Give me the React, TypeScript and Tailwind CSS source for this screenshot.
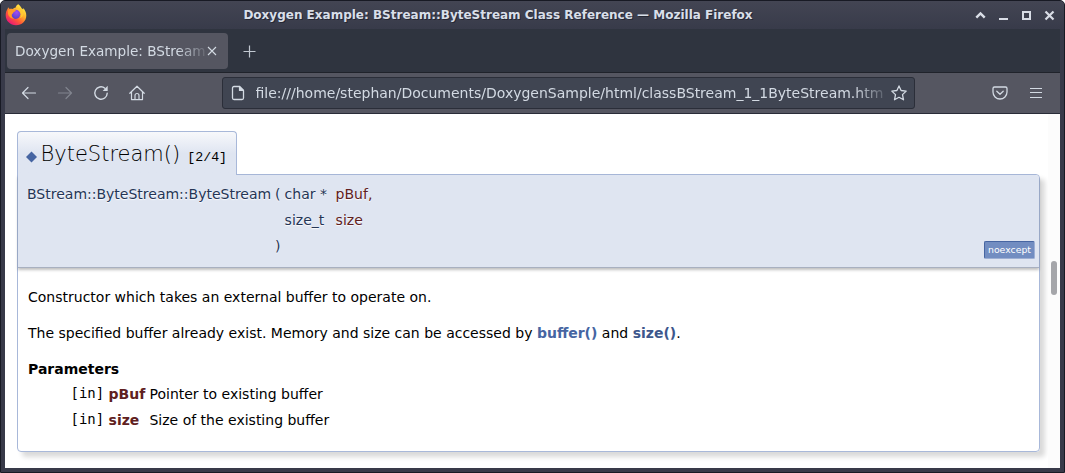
import React from "react";

const FirefoxLogo = () => (
  <svg viewBox="0 0 22 22" className="h-[22px] w-[22px] shrink-0">
    <defs>
      <linearGradient id="fox" x1="0.85" y1="0.1" x2="0.2" y2="0.95">
        <stop offset="0" stopColor="#fff04a" />
        <stop offset="0.35" stopColor="#ffb02a" />
        <stop offset="0.65" stopColor="#ff5a35" />
        <stop offset="1" stopColor="#e8127c" />
      </linearGradient>
      <radialGradient id="globe" cx="0.6" cy="0.3" r="0.8">
        <stop offset="0" stopColor="#a04cf5" />
        <stop offset="1" stopColor="#4b3fc4" />
      </radialGradient>
    </defs>
    <path fill="url(#fox)" d="M13.3.2C15 1.4 16 3 16.6 4.2c.8.4 1.3.9 1.6 1.3l-.1-1.4c2 2 3.2 4.700 3.200 7.300C21.300 17 16.800 21.200 11 21.200S.7 17 .7 11.300c0-3 .8-5 2.100-6.800l.2-1.300 1.700 1.700c1.100-.2 2.200-.1 3 .2.9-.9 1.900-1.500 3-1.700C10.900 2 12 .9 13.300.2z" />
    <circle cx="10.700" cy="10.300" r="4.600" fill="url(#globe)" />
    <path fill="#ff9a28" d="M3 6.500c2-1.500 4-1.500 5.300-.7 1 .1 2 .1 2.700.5-.5 1.300-2 1.600-2.600 1.900.1 1.300-1.200 1.500-1.600 2.500-.4 1.800.8 3.200 2.400 3.900-3 .5-5.800-2-6.200-5z" />
    <path fill="#ffc832" d="M11 5.500c2.500-.2 5.300 2 5.200 5.200 0 1.500-.7 2.900-1.800 3.700 2.800-.8 4.300-3.200 4-5.900-.3-2.200-2.500-3.600-3.800-4.500z" />
  </svg>
);

const Caret = () => (
  <svg viewBox="0 0 11 11" className="size-[11px]" fill="none" stroke="#d9dde6" strokeWidth="2.400"><path d="M1.300 7.700 5.500 3.500l4.200 4.200" /></svg>
);
const Minimize = () => (
  <svg viewBox="0 0 11 11" className="size-[11px]"><path fill="#d9dde6" d="M1 8h9v2H1z" /></svg>
);
const Maximize = () => (
  <svg viewBox="0 0 11 11" className="size-[11px]"><path fill="none" stroke="#d9dde6" strokeWidth="2" d="M2 2h7v7H2z" /></svg>
);
const Close = () => (
  <svg viewBox="0 0 11 11" className="size-[11px]"><path fill="none" stroke="#d9dde6" strokeWidth="2.200" d="m1.500 1.500 8 8m0-8-8 8" /></svg>
);

const Glyph = ({ children, className = "" }: { children: React.ReactNode; className?: string }) => (
  <svg viewBox="0 0 16 16" className={`size-4 shrink-0 ${className}`} fill="none" stroke="#d3dae3" strokeWidth="1.200" strokeLinecap="round" strokeLinejoin="round">
    {children}
  </svg>
);

export default function App() {
  return (
    <div className="h-[473px] w-[1065px] overflow-hidden bg-white font-['DejaVu_Sans',sans-serif]">
      <div className="flex h-full flex-col overflow-hidden rounded-t-[5px] border border-[#181a24] bg-[#383a49] px-1 pb-1">
        <header className="-mx-1 flex h-7 shrink-0 items-center bg-linear-to-b from-[#434553] to-[#383b4a] pr-[9px] pl-1">
          <FirefoxLogo />
          <div className="flex-1 pr-[6px] text-center text-[12px] font-bold whitespace-nowrap text-[#d9dfe9] [text-shadow:1px_1px_0_#252733]">Doxygen Example: BStream::ByteStream Class Reference — Mozilla Firefox</div>
          <div className="flex gap-3">
            <Caret /><Minimize /><Maximize /><Close />
          </div>
        </header>

        <div className="flex h-[44px] shrink-0 items-start border-b border-[#20232b] bg-[#2f343f] pt-1 pl-[2px]">
          <div className="flex h-9 w-[221px] items-center rounded bg-[#555661] pr-[11px] pl-2">
            <div className="w-[190px] shrink-0 text-[13.600px] whitespace-nowrap text-[#d3dae3] [mask-image:linear-gradient(to_right,black_162px,transparent_195px)]">Doxygen Example: BStream:</div>
            <svg viewBox="0 0 10 10" className="ml-[2px] size-[10px] shrink-0" stroke="#d3dae3" strokeWidth="1.100"><path d="m1 1 8 8m0-8-8 8" /></svg>
          </div>
          <svg viewBox="0 0 13 13" className="mt-[12px] ml-[15px] size-[13px]" stroke="#c2c8d1" strokeWidth="1.200"><path d="M6.500.5v12M.5 6.500h12" /></svg>
        </div>

        <nav className="flex h-[41px] shrink-0 items-center border-b border-[#292c38] bg-[#555661] pr-4 pl-4">
          <div className="flex w-[201px] gap-5">
            <Glyph><path d="M14.500 8h-13M7 2.500 1.500 8 7 13.500" /></Glyph>
            <Glyph className="opacity-35"><path d="M1.500 8h13M9 2.500 14.500 8 9 13.500" /></Glyph>
            <Glyph><path strokeWidth="1.400" d="M14.200 8.200a6.200 6.200 0 1 1-2.300-5" /><path fill="#d3dae3" stroke="none" d="M14.700.8v5.100h-5z" /></Glyph>
            <Glyph><path d="M.8 8.300 8 1.200l7.200 7.100M2.500 6.800v7.800h11V6.800M6 14.500v-4a2 2 0 0 1 4 0v4" /></Glyph>
          </div>
          <div className="flex h-8 w-[693px] items-center rounded-[3px] border border-[#2b2e39] bg-[#404552] pr-[7px] pl-[7px]">
            <Glyph><path strokeWidth="1.300" d="M9.500 1.500H4A1.500 1.500 0 0 0 2.500 3v10A1.500 1.500 0 0 0 4 14.500h8a1.500 1.500 0 0 0 1.500-1.500V5.500z" /><path fill="#d3dae3" d="M9.500 1.500v4h4z" /></Glyph>
            <div className="ml-[9.500px] w-[630px] shrink-0 text-[14px] whitespace-nowrap text-[#d3dae3] [mask-image:linear-gradient(to_right,black_598px,transparent_635px)]">file:///home/stephan/Documents/DoxygenSample/html/classBStream_1_1ByteStream.htm</div>
            <Glyph className="ml-[5.500px]"><path strokeWidth="1.300" d="m8 .9 2.100 4.600 5.100.6-3.700 3.500 1 5.200L8 12.300l-4.500 2.500 1-5.200L.8 6.100l5.100-.6z" /></Glyph>
          </div>
          <div className="ml-auto flex gap-5">
            <Glyph><path strokeWidth="1.300" d="M2.500 2h11A1.500 1.500 0 0 1 15 3.500V7A7 7 0 0 1 1 7V3.500A1.500 1.500 0 0 1 2.500 2zM4.800 6.200 8 9.200l3.200-3" /></Glyph>
            <Glyph><path strokeLinecap="butt" strokeWidth="1" d="M2 3.500h12M2 7.500h12M2 12.500h12" /></Glyph>
          </div>
        </nav>

        <main className="flex min-h-0 flex-1 bg-white">
          <div className="min-w-0 flex-1 pt-[17px] pr-2 pl-3 text-[14px] leading-[22px] text-black">
            <h2 className="relative z-10 -mb-px flex h-[44px] w-[220px] items-center rounded-t border border-b-0 border-[#a8b8d9] bg-linear-to-b from-[#f7f8fb] via-[#dfe5f1] via-50% to-[#dfe5f1] pl-[8px] whitespace-nowrap">
              <svg viewBox="0 0 12 12" className="mt-[6px] size-[12px]"><path fill="#4665a2" d="M5.500.5 11 6l-5.500 5.500L0 6z" /></svg>
              <span className="ml-[2.500px] text-[21px] font-extralight">ByteStream()</span>
              <span className="mt-[8px] ml-[7px] font-['Liberation_Mono',monospace] text-[13.300px] font-normal">[2/4]</span>
            </h2>
            <section className="h-[278px] w-[1023px] rounded-tr rounded-b border border-[#a8b8d9] shadow-[5px_5px_5px_rgba(0,0,0,0.15)]">
              <div className="flex h-[93px] justify-between rounded-tr border-b border-[#a8b0c0] bg-[#dfe5f1] pt-[6px] pl-[9px] text-[#253555] shadow-[0_2px_3px_rgba(0,0,0,0.25)] [text-shadow:0_1px_1px_rgba(255,255,255,0.9)]">
                <div className="grid auto-rows-[26px] grid-cols-[248px_9.600px_51px_60px] leading-[26px] whitespace-nowrap">
                  <span>BStream::ByteStream::ByteStream</span><span>(</span><span>char *</span><span className="text-[#602020]">pBuf,</span>
                  <span /><span /><span>size_t</span><span className="text-[#602020]">size</span>
                  <span /><span>)</span>
                </div>
                <span className="mt-[60px] mr-[4px] h-[18px] w-[51px] rounded-[2px] border border-[#4665a2] border-r-[#9dafd4] border-b-[#9dafd4] bg-[#728dc1] text-center text-[9.330px] leading-[16px] text-white [text-shadow:none]">noexcept</span>
              </div>
              <div className="px-[10px] pt-[18px]">
                <p>Constructor which takes an external buffer to operate on.</p>
                <p className="mt-[14px]">The specified buffer already exist. Memory and size can be accessed by <b className="text-[#4665a2]">buffer()</b> and <b className="text-[#3d578c]">size()</b>.</p>
                <h3 className="mt-[14px] font-bold">Parameters</h3>
                <div className="grid auto-rows-[26px] grid-cols-[38.100px_40.900px_auto] pl-[42.500px] leading-[28px]">
                  <span className="-mt-px font-['DejaVu_Sans_Mono',monospace]">[in]</span><b className="text-[#602020]">pBuf</b><span>Pointer to existing buffer</span>
                  <span className="-mt-px font-['DejaVu_Sans_Mono',monospace]">[in]</span><b className="text-[#602020]">size</b><span>Size of the existing buffer</span>
                </div>
              </div>
            </section>
          </div>
          <div className="flex w-3 justify-center bg-[#fcfcfc] pt-[147px]">
            <div className="h-[34px] w-[6px] rounded-full bg-[#a5a6aa]" />
          </div>
        </main>
      </div>
    </div>
  );
}
